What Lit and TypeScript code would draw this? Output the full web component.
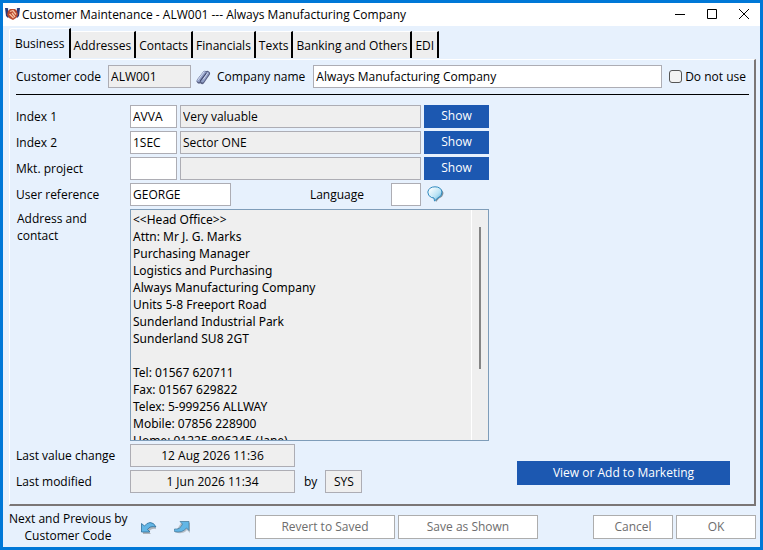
import { LitElement, html, css, svg } from "lit";
import { customElement, state } from "lit/decorators.js";

const TABS = ["Business", "Addresses", "Contacts", "Financials", "Texts", "Banking and Others", "EDI"];

const ADDRESS = `<<Head Office>>
Attn: Mr J. G. Marks
Purchasing Manager
Logistics and Purchasing
Always Manufacturing Company
Units 5-8 Freeport Road
Sunderland Industrial Park
Sunderland SU8 2GT

Tel: 01567 620711
Fax: 01567 629822
Telex: 5-999256 ALLWAY
Mobile: 07856 228900
Home: 01225 896245 (Jane)
`;

const INDEXES = [
  { id: "index1", label: "Index 1", code: "AVVA", text: "Very valuable" },
  { id: "index2", label: "Index 2", code: "1SEC", text: "Sector ONE" },
  { id: "project", label: "Mkt. project", code: "", text: "" },
];

const handshake = svg`
  <path d="M0 1h3l2 7-2 3-2-2z" fill="#2b3a78"/>
  <path d="M15 1h-3l-2 7 2 3 2-2z" fill="#2b3a78"/>
  <path d="M3.500 1l1 5M11.500 1l-1 5" stroke="#e3e8f4" stroke-width="1.500"/>
  <path d="M5 2h5l2 2 1 4-2 3-3 2-4-2-2-3 1-4z" fill="#b9482c"/>
  <path d="M5 4.500l3-1 3 4M4.500 7l4 4M7 6l3 4" stroke="#f6c3a2" stroke-width="1.300" fill="none"/>`;

const clip = svg`
  <path d="M4 13l6-7.500M7 13.500l5.500-8" stroke="#596184" stroke-width="5" stroke-linecap="round"/>
  <path d="M3.500 12.500l6-8M7.500 13l5-7.500" stroke="#93a1c8" stroke-width="3" stroke-linecap="round"/>
  <path d="M3 12l6-8M8.500 11l4-6" stroke="#d5dcf0" stroke-linecap="round"/>
  <path d="M5.500 12.500l5.500-7" stroke="#434b70" stroke-width="1.200" stroke-linecap="round"/>`;

const bubble = svg`
  <defs><linearGradient id="sheen" x1="0" y1="0" x2="1" y2="1">
    <stop offset=".1" stop-color="#fff"/><stop offset=".6" stop-color="#b9e3f5"/><stop offset="1" stop-color="#4aa3cf"/>
  </linearGradient></defs>
  <path d="M5 12Q2 10 2 7 3 2 8.500 2T15.500 7Q15 11 11 12.500L8 16 7 13z" transform="translate(1 0)" fill="#4d5d68" opacity=".65"/>
  <path d="M4.500 11.500Q.8 10 .8 6 2 .8 8 .8T15 6Q15 10.500 11 11.800L7.500 15 7 12z" fill="url(#sheen)" stroke="#2f8abf"/>`;

const previous = svg`
  <path d="M2 14h8l-2-2q2-4 7-3v1q0-5-4-5-4 0-7 3L2 6z" transform="translate(0 1)" fill="#777" opacity=".5"/>
  <path d="M.5 4.500v8.500h8.500L6.500 10.500Q9 6.500 15 8 13 3.500 9 3.500 5.500 4 3.500 7z" fill="#62b6e6" stroke="#2d6f9b" stroke-width=".8"/>`;

const next = svg`
  <path d="M7 4h9v10l-3-3Q9 16 1 13.500" fill="#777" opacity=".4"/>
  <path d="M6 2.500h9v9L12.500 9Q8 14.500 .5 12.500 0 11 .5 10 6 11 8.500 5z" fill="#62b6e6" stroke="#4a7d9e" stroke-width=".8"/>`;

@customElement("app-root")
export class AppRoot extends LitElement {
  @state() private tab = TABS[0];

  static styles = css`
    :host {
      display: block;
      box-sizing: border-box;
      min-height: 100vh;
      font: 12px/17px "Open Sans", "Noto Sans", sans-serif;
      color: #000;
    }
    *, *::before, *::after { box-sizing: border-box; }
    input, button, textarea { font: inherit; color: inherit; margin: 0; border-radius: 0; }
    svg { display: block; fill: none; flex: none; }
    .window {
      display: flex;
      flex-direction: column;
      min-height: 100vh;
      border: 3px solid #0078d7;
      background: #e7f1fd;
    }
    .title { display: flex; align-items: center; height: 23px; background: #fff; padding-left: 2px; }
    .title h1 { flex: 1; margin: 0; padding-left: 1px; font: inherit; line-height: 17px; }
    .win { width: 32px; height: 23px; padding: 0; border: 0; background: none; display: grid; place-items: center; }
    .tabs { display: flex; align-items: flex-end; height: 33px; padding: 3px 0 1px 6px; }
    .tab {
      height: 27px; padding: 1px 3px 0; border: 0; border-right: 2px solid #000; border-top: 1px solid #fff;
      background: #eee; white-space: nowrap; border-top-left-radius: 3px;
    }
    .tab.on {
      height: 30px; padding: 0 5px 1px; background: #e7f1fd; margin-right: -1px; z-index: 1;
      border-left: 1px solid #fff;
    }
    .panel {
      flex: 1; display: flex; flex-direction: column; margin: 0 4px 0 6px; padding: 5px 5px 5px 6px;
      border: 1px solid #fff; border-right: 2px solid #7a7676; border-bottom: 2px solid #7a7676;
    }
    .field { height: 23px; border: 1px solid #adadb4; padding: 0 2px; background: #fff; min-width: 0; }
    .field:read-only { background: #efefef; }
    .head { display: flex; align-items: center; padding-bottom: 6px; border-bottom: 1px solid #000; }
    .code { width: 83px; margin: 0 4px 0 7px; }
    .company { flex: 1; margin: 0 7px 0 8px; }
    .clip { margin-right: 5px; }
    .check { display: flex; align-items: center; gap: 3px; margin-right: 3px; }
    .check input { appearance: none; width: 13px; height: 13px; border: 1px solid #555; border-radius: 3px; background: #f3f3f3; }
    .check input:checked { background: #1c58b1; }
    .form { flex: 1; display: grid; grid-template-columns: 473px 1fr; padding-top: 10px; }
    .rows { display: grid; grid-template-columns: 114px 1fr; row-gap: 3px; align-content: start; align-items: center; }
    .line { display: flex; gap: 3px; align-items: center; }
    .short { width: 47px; }
    .grow { flex: 1; }
    .blue { border: 0; background: #1c58b1; color: #fff; padding: 0 0 2px; height: 23px; }
    .show { width: 65px; }
    .user { width: 101px; }
    .lang { margin-left: auto; margin-right: 24px; }
    .tiny { width: 30px; }
    .bubble { margin: 0 45px 0 3px; }
    .addr { align-self: start; padding: 1px; }
    .box { display: flex; height: 232px; border: 1px solid #7f9db9; background: #efefef; }
    .box textarea {
      flex: 1; resize: none; border: 0; outline: 0; background: none; padding: 1px 2px; overflow: hidden;
      font-family: "Noto Sans", sans-serif;
    }
    .bar { width: 17px; border-left: 1px solid #fff; padding: 17px 0 0 7px; }
    .thumb { width: 2px; height: 142px; background: #858585; }
    .date { width: 165px; text-align: center; }
    .by { padding: 0 5px 0 6px; }
    .sys { width: 37px; text-align: center; }
    .side { display: flex; align-items: flex-end; justify-content: flex-end; padding: 0 19px 14px 0; }
    .side .blue { width: 213px; height: 24px; }
    .foot { display: flex; align-items: center; gap: 3px; padding: 4px 4px 3px 6px; }
    .foot p { margin: 0; text-align: center; width: 118px; white-space: nowrap; }
    .nav { border: 0; background: none; padding: 0; width: 16px; height: 16px; margin-left: 11px; }
    .nav + .nav { margin-left: 14px; }
    .btn { height: 24px; border: 1px solid #adadad; background: #fff; color: #6d6d6d; padding: 0 0 2px; }
    .wide { width: 140px; }
    .first { margin-left: auto; }
    .narrow { width: 80px; }
    .gap { margin-left: 52px; }
  `;

  render() {
    return html`<main class="window">
      <header class="title">
        <svg width="16" height="16">${handshake}</svg>
        <h1>Customer Maintenance - ALW001 --- Always Manufacturing Company</h1>
        <button class="win" aria-label="Minimize"><svg width="10" height="11"><path d="M0 5.500h10" stroke="#000"/></svg></button>
        <button class="win" aria-label="Maximize"><svg width="10" height="11"><path d="M.5.5h9v9h-9z" stroke="#000"/></svg></button>
        <button class="win" aria-label="Close"><svg width="10" height="11"><path d="M0 0l10 10M10 0L0 10" stroke="#000"/></svg></button>
      </header>
      <nav class="tabs" role="tablist">
        ${TABS.map((t) => html`<button role="tab" class="tab ${t === this.tab ? "on" : ""}" aria-selected=${t === this.tab}
          @click=${() => (this.tab = t)}>${t}</button>`)}
      </nav>
      <section class="panel">
        <div class="head">
          <label for="code">Customer code</label><input id="code" class="field code" readonly value="ALW001">
          <svg class="clip" width="17" height="18">${clip}</svg>
          <label for="company">Company name</label><input id="company" class="field company" value="Always Manufacturing Company">
          <label class="check"><input type="checkbox">Do not use</label>
        </div>
        <div class="form">
          <div class="rows">
            ${INDEXES.map((r) => html`<label for=${r.id}>${r.label}</label>
              <div class="line"><input id=${r.id} class="field short" value=${r.code}>
                <input class="field grow" readonly aria-label="${r.label} description" value=${r.text}>
                <button class="blue show">Show</button></div>`)}
            <label for="user">User reference</label>
            <div class="line"><input id="user" class="field user" value="GEORGE">
              <label class="lang" for="lang">Language</label><input id="lang" class="field tiny">
              <svg class="bubble" width="17" height="17">${bubble}</svg></div>
            <label class="addr" for="addr">Address and<br>contact</label>
            <div class="box"><textarea id="addr" readonly .value=${ADDRESS}></textarea><div class="bar"><div class="thumb"></div></div></div>
            <label for="changed">Last value change</label>
            <div class="line"><input id="changed" class="field date" readonly value="12 Aug 2026 11:36"></div>
            <label for="modified">Last modified</label>
            <div class="line"><input id="modified" class="field date" readonly value="1 Jun 2026 11:34">
              <label class="by" for="by">by</label><input id="by" class="field sys" readonly value="SYS"></div>
          </div>
          <div class="side"><button class="blue">View or Add to Marketing</button></div>
        </div>
      </section>
      <footer class="foot">
        <p>Next and Previous by<br>Customer Code</p>
        <button class="nav" aria-label="Previous"><svg width="16" height="16">${previous}</svg></button>
        <button class="nav" aria-label="Next"><svg width="16" height="16">${next}</svg></button>
        <button class="btn wide first">Revert to Saved</button>
        <button class="btn wide">Save as Shown</button>
        <button class="btn narrow gap">Cancel</button>
        <button class="btn narrow">OK</button>
      </footer>
    </main>`;
  }
}
